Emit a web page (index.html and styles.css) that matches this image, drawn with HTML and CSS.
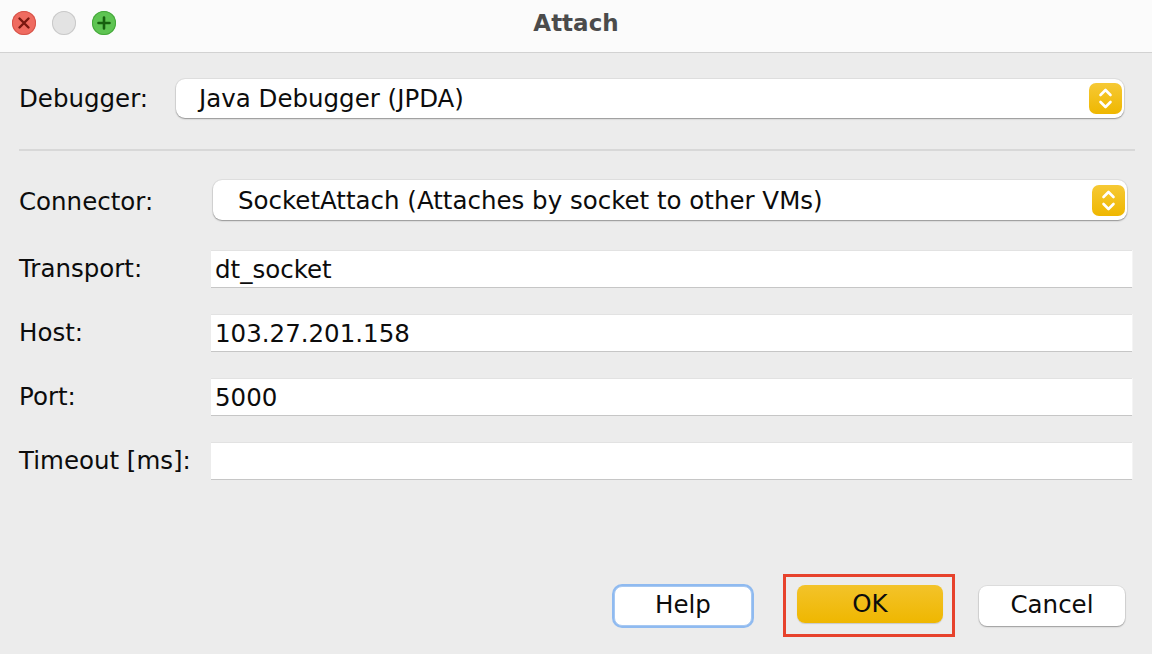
FILE: index.html
```html
<!DOCTYPE html>
<html lang="en">
<head>
    <title>Attach</title>
    <link rel="stylesheet" href="styles.css">
</head>
<body>
<div class="window">
    <div class="titlebar">
        <div class="lights">
            <!-- close -->
            <span class="light light_close">
                <svg width="24" height="24" viewBox="0 0 24 24">
                    <path d="M7.5 7.5 L16.5 16.5 M16.5 7.5 L7.5 16.5" stroke="#7a1810" stroke-width="2.4" stroke-linecap="round"/>
                </svg>
            </span>
            <!-- minimize (disabled) -->
            <span class="light light_min"></span>
            <!-- zoom -->
            <span class="light light_zoom">
                <svg width="24" height="24" viewBox="0 0 24 24">
                    <path d="M12 6.5 V17.5 M6.5 12 H17.5" stroke="#17600f" stroke-width="2.6" stroke-linecap="round"/>
                </svg>
            </span>
        </div>
        <div class="title">Attach</div>
    </div>

    <div class="content">
        <div class="row_debugger">
            <label class="label">Debugger:</label>
            <div class="combo combo_debugger">
                <span class="combo_text">Java Debugger (JPDA)</span>
                <span class="stepper">
                    <svg width="33" height="31" viewBox="0 0 33 31">
                        <path d="M11.5 12 L16.5 7 L21.5 12 M11.5 19 L16.5 24 L21.5 19" fill="none" stroke="#fff" stroke-width="2.6" stroke-linecap="round" stroke-linejoin="round"/>
                    </svg>
                </span>
            </div>
        </div>

        <div class="separator"></div>

        <div class="form">
            <label class="label">Connector:</label>
            <div class="combo combo_connector">
                <span class="combo_text">SocketAttach (Attaches by socket to other VMs)</span>
                <span class="stepper">
                    <svg width="33" height="31" viewBox="0 0 33 31">
                        <path d="M11.5 12 L16.5 7 L21.5 12 M11.5 19 L16.5 24 L21.5 19" fill="none" stroke="#fff" stroke-width="2.6" stroke-linecap="round" stroke-linejoin="round"/>
                    </svg>
                </span>
            </div>

            <label class="label">Transport:</label>
            <div class="field">dt_socket</div>

            <label class="label">Host:</label>
            <div class="field">103.27.201.158</div>

            <label class="label">Port:</label>
            <div class="field">5000</div>

            <label class="label">Timeout [ms]:</label>
            <div class="field"></div>
        </div>
    </div>

    <div class="footer">
        <button type="button" class="btn btn_focus">Help</button>
        <span class="highlight">
            <button type="button" class="btn btn_default">OK</button>
        </span>
        <button type="button" class="btn">Cancel</button>
    </div>
</div>
</body>
</html>
```

FILE: styles.css
```css
* {
    box-sizing: border-box;
    font-family: "DejaVu Sans", Verdana, sans-serif;
}

html, body {
    margin: 0;
    padding: 0;
    background-color: #ececec;
}

.window {
    width: 1152px;
    height: 654px;
    display: flex;
    flex-direction: column;
    background-color: #ececec;
    overflow: hidden;
}

.titlebar {
    height: 53px;
    flex: none;
    position: relative;
    background-color: #fbfbfb;
    border-bottom: 1px solid #d2d2d2;
    display: flex;
    align-items: center;
    justify-content: center;
}

.lights {
    position: absolute;
    left: 12px;
    top: 11px;
    display: flex;
    gap: 16px;
}

.light {
    width: 24px;
    height: 24px;
    border-radius: 50%;
    display: block;
}

.light svg {
    display: block;
}

.light_close {
    background-color: #ef6b60;
    box-shadow: inset 0 0 0 1px #d6544a;
}

.light_min {
    background-color: #e3e3e3;
    box-shadow: inset 0 0 0 1px #c9c9c9;
}

.light_zoom {
    background-color: #5ec452;
    box-shadow: inset 0 0 0 1px #45a73b;
}

.title {
    font-size: 23px;
    font-weight: bold;
    color: #4b4b4b;
    margin-top: -7px;
}

.content {
    padding: 26px 17px 0 19px;
}

.label {
    font-size: 24.5px;
    color: #0c0c0c;
    white-space: nowrap;
}

.row_debugger {
    display: flex;
    align-items: center;
}

.row_debugger .label {
    width: 157px;
}

.combo {
    background-color: #fff;
    border-radius: 9px;
    box-shadow: 0 0 0 1px rgba(0, 0, 0, 0.05), 0 1px 1.5px rgba(0, 0, 0, 0.35);
    display: flex;
    align-items: center;
    justify-content: space-between;
    font-size: 24.5px;
    color: #0c0c0c;
}

.combo_debugger {
    width: 948px;
    height: 39px;
    padding: 0 2px 0 23px;
}

.combo_connector {
    height: 40px;
    margin: 0 8px 0 2px;
    padding: 0 2px 0 25px;
}

.stepper {
    width: 33px;
    height: 31px;
    border-radius: 7px;
    background: linear-gradient(#f6c935, #efb700);
    display: block;
}

.stepper svg {
    display: block;
}

.separator {
    height: 2px;
    background-color: #d8d8d8;
    margin: 31px 0 29px 0;
}

.form {
    display: grid;
    grid-template-columns: 192px 1fr;
    align-items: center;
    row-gap: 27px;
}

.form .combo_connector {
    margin-bottom: 3px;
}

.field {
    height: 37px;
    background-color: #fff;
    border-top: 1px solid #e2e2e2;
    box-shadow: 0 1px 0 #c6c6c6, 1px 0 0 #f4f4f4;
    margin-right: 3px;
    padding: 0 4px;
    font-size: 24.5px;
    color: #0c0c0c;
    display: flex;
    align-items: center;
}

.footer {
    margin-top: auto;
    padding: 0 27px 17px 0;
    display: flex;
    align-items: center;
    justify-content: flex-end;
}

.btn {
    height: 40px;
    width: 146px;
    background-color: #fff;
    border: none;
    border-radius: 8px;
    box-shadow: 0 0 0 1px rgba(0, 0, 0, 0.06), 0 1px 1.5px rgba(0, 0, 0, 0.3);
    font-size: 24.5px;
    color: #0c0c0c;
    padding: 0 0 2px 0;
}

.btn_focus {
    width: 138px;
    border: 1px solid #a6c8f2;
    box-shadow: 0 0 0 2px #8fbaf0;
    margin-right: 31px;
}

.highlight {
    border: 3px solid #e7422c;
    padding: 8px 9px 11px 11px;
    margin-right: 24px;
    display: block;
}

.btn_default {
    height: 38px;
    display: block;
    background: linear-gradient(#f3c32a, #efb700);
    box-shadow: 0 1px 1px rgba(0, 0, 0, 0.15);
}
```
